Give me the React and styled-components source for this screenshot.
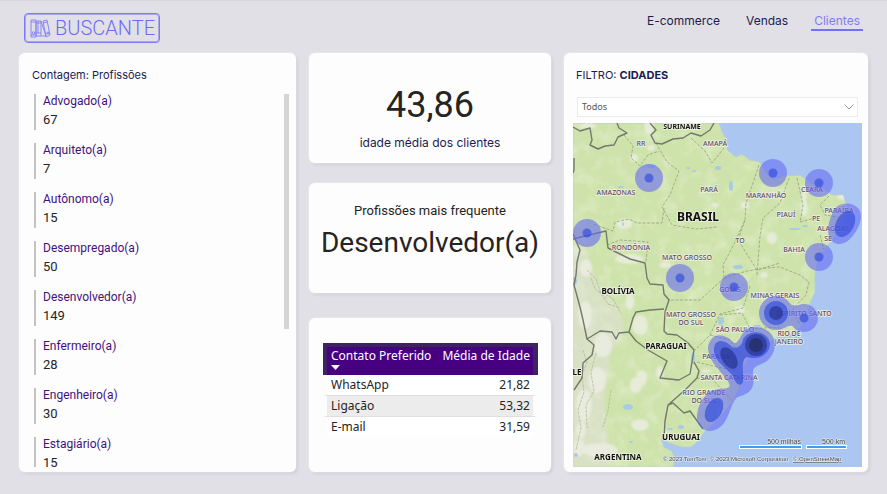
import React from "react";
import styled, { createGlobalStyle } from "styled-components";

const ui = `Inter, "Open Sans", sans-serif`;
const din = `Roboto, "Noto Sans", sans-serif`;

const GlobalStyle = createGlobalStyle`
  *, *::before, *::after { box-sizing: border-box; }
  body { margin: 0; background: #e1e0e6; }
`;

const Page = styled.div`
  display: flex;
  flex-direction: column;
  height: 100vh;
  min-height: 480px;
  padding: 0 19px 22px;
  border-top: 1px solid #d6d5db;
  background: #e1e0e6;
  color: #12143f;
  font-family: ${ui};
`;

const Header = styled.header`
  display: flex;
  flex: none;
  align-items: flex-start;
  justify-content: space-between;
  height: 52px;
  padding: 12px 5px 0;
`;

const Logo = styled.a`
  display: flex;
  align-items: center;
  gap: 4px;
  height: 30px;
  padding: 0 4px 0 5px;
  border: 1px solid #7f78f3;
  border-radius: 4px;
  box-shadow: inset 0 0 0 1px #aaa6f0;
  color: #7069f8;
  font: 300 20px/28px ${din};
  text-decoration: none;
`;

const LogoIcon = styled.svg`
  flex: none;
  width: 21px;
  height: 19px;
  fill: none;
  stroke: #8a85f3;
`;

const Nav = styled.nav`
  display: flex;
  gap: 20px;
`;

const NavLink = styled.a`
  height: 18px;
  padding: 0 3px;
  border-bottom: 2px solid ${(p) => (p.$active ? "#7570fa" : "transparent")};
  color: ${(p) => (p.$active ? "#827cf4" : "#1b1c50")};
  font-size: 12px;
  line-height: 16px;
  text-decoration: none;
`;

const Board = styled.main`
  display: grid;
  flex: 1;
  grid-template-columns: 277fr 242fr 304fr;
  gap: 13px;
  min-height: 0;
`;

const Column = styled.div`
  display: grid;
  grid-template-rows: 110fr 110fr 159fr;
  gap: 20px;
  min-height: 0;
`;

const Card = styled.section`
  display: flex;
  flex-direction: column;
  min-width: 0;
  min-height: 0;
  border-radius: 6px;
  background: #fdfdfd;
  box-shadow: 0 0 2px #f3f2f6, 2px 2px 3px #cfced8;
`;

const ListCard = styled(Card)`
  padding: 14px 6px 5px 13px;
`;

const FilterCard = styled(Card)`
  padding: 14px 6px 5px 9px;
`;

const MetricCard = styled(Card)`
  align-items: center;
  padding-top: ${(p) => (p.$top)}px;
`;

const TableCard = styled(Card)`
  margin-top: 5px;
  padding: 25px 13px 0 14px;
`;

const Heading = styled.h2`
  margin: 0;
  color: #1b1c50;
  font-size: 11px;
  font-weight: 400;
  line-height: 16px;
`;

const ScrollRow = styled.div`
  display: flex;
  flex: 1;
  justify-content: space-between;
  min-height: 0;
  margin-top: 11px;
`;

const ProfessionList = styled.dl`
  display: flex;
  flex: 1;
  flex-direction: column;
  gap: 13px;
  margin: 0 0 0 2px;
  overflow-y: auto;
  scrollbar-width: none;
`;

const Profession = styled.div`
  flex: none;
  padding-left: 7px;
  border-left: 2px solid #c3c3c3;
  font-family: ${din};
  font-size: 12px;
`;

const Name = styled.dt`
  color: #43107e;
  line-height: 15px;
`;

const Count = styled.dd`
  margin: 0;
  color: #252423;
  font-size: 13px;
  line-height: 21px;
`;

const Thumb = styled.div`
  width: 5px;
  height: 63%;
  margin-right: 1px;
  background: #d6d5d4;
`;

const Value = styled.strong`
  color: #252423;
  font-family: ${din};
  font-size: ${(p) => (p.$large ? 36 : 28)}px;
  font-weight: 400;
  line-height: ${(p) => (p.$large ? 40 : 48)}px;
`;

const Caption = styled.span`
  margin-top: ${(p) => (p.$below ? 10 : 0)}px;
  color: ${(p) => (p.$below ? "#1b1c50" : "#252423")};
  font-family: ${(p) => (p.$below ? ui : din)};
  font-size: ${(p) => (p.$below ? 12 : 13)}px;
  line-height: 16px;
`;

const Table = styled.table`
  width: 100%;
  border-spacing: 0;
  color: #252423;
  font: 12px/16px "Noto Sans", sans-serif;
  white-space: nowrap;

  th, td { text-align: left; }
  th:last-child, td:last-child { text-align: right; }
`;

const HeadCell = styled.th`
  height: 32px;
  padding: 2px 3px 0;
  border-top: 4px solid #3c2460;
  background: #480082;
  color: #fff;
  font-weight: 400;
  line-height: 14px;
  vertical-align: top;

  &:first-child { border-left: 4px solid #3c2460; padding-left: 4px; }
  &:last-child { border-right: 5px solid #3c2460; }
`;

const SortIcon = styled.svg`
  display: block;
  width: 9px;
  height: 5px;
  margin-top: 2px;
  fill: #fff;
`;

const Cell = styled.td`
  height: 21px;
  padding: 0 4px;
  border-bottom: 1px solid ${(p) => (p.$last ? "transparent" : "#dfdfdf")};
  background: ${(p) => (p.$shade ? "#ececec" : "#fff")};
  background-clip: padding-box;

  &:first-child { border-left: 4px solid transparent; }
  &:last-child { border-right: 5px solid transparent; padding-right: 3px; }
`;

const SelectBox = styled.div`
  display: grid;
  flex: none;
  align-items: center;
  margin: 14px 4px 6px;
`;

const Select = styled.select`
  grid-area: 1 / 1;
  width: 100%;
  height: 20px;
  padding: 0 4px;
  border: 1px solid #ececec;
  border-radius: 0;
  appearance: none;
  background: #fff;
  color: #555;
  font: 9px/16px "Noto Sans", sans-serif;
`;

const Chevron = styled.svg`
  grid-area: 1 / 1;
  justify-self: end;
  width: 10px;
  height: 6px;
  margin-right: 4px;
  fill: none;
  stroke: #999;
  pointer-events: none;
`;

const MapView = styled.svg`
  display: block;
  flex: 1;
  width: 100%;
  min-height: 0;
  font-family: "Noto Sans", sans-serif;
`;

const professions = [
  ["Advogado(a)", 67],
  ["Arquiteto(a)", 7],
  ["Autônomo(a)", 15],
  ["Desempregado(a)", 50],
  ["Desenvolvedor(a)", 149],
  ["Enfermeiro(a)", 28],
  ["Engenheiro(a)", 30],
  ["Estagiário(a)", 15],
];

const contacts = [
  ["WhatsApp", "21,82"],
  ["Ligação", "53,32"],
  ["E-mail", "31,59"],
];

const states = [
  ["RR", 641, 146], ["AMAPÁ", 715, 146], ["AMAZONAS", 616, 195], ["PARÁ", 709, 192],
  ["MARANHÃO", 766, 198], ["CEARÁ", 812, 192], ["PIAUÍ", 786, 217], ["PE", 816, 221],
  ["PARAÍBA", 839, 213], ["ALAGOAS", 833, 231], ["SE", 828, 241], ["TO", 740, 243],
  ["BAHIA", 794, 252], ["RONDÔNIA", 631, 250], ["MATO GROSSO", 687, 260],
  ["GOIÁS", 730, 292], ["MINAS GERAIS", 775, 298], ["ESPÍRITO SANTO", 804, 316],
  ["MATO GROSSO", 691, 317], ["DO SUL", 691, 325], ["SÃO PAULO", 735, 332],
  ["RIO DE", 789, 336], ["JANEIRO", 789, 344], ["PARANÁ", 716, 359],
  ["SANTA CATARINA", 729, 380], ["RIO GRANDE", 704, 395], ["DO SUL", 704, 403],
];

const countries = [
  ["SURINAME", 682, 129, 7], ["BRASIL", 698, 221, 12], ["BOLÍVIA", 618, 294, 8],
  ["PARAGUAI", 666, 349, 8], ["URUGUAI", 681, 440, 8], ["ARGENTINA", 618, 460, 8],
  ["LE", 577, 375, 8],
];

const spots = [
  [649, 178], [773, 173], [819, 183], [587, 233],
  [680, 278], [819, 257], [734, 287], [804, 318],
];

const lakes = [
  [651, 166, 5, 2], [621, 187, 3, 1], [688, 168, 2, 1], [694, 171, 2, 1], [718, 168, 3, 2],
  [731, 186, 2, 5], [623, 224, 1, 2], [574, 281, 3, 4], [628, 407, 5, 3], [681, 427, 3, 2],
  [670, 429, 3, 1], [693, 358, 2, 6], [677, 380, 3, 1], [631, 442, 2, 1], [738, 267, 5, 2],
  [721, 321, 3, 4], [795, 229, 6, 1], [805, 226, 3, 1], [757, 326, 4, 1], [576, 455, 2, 2],
];

const pale = [
  [649, 127, 5, 7], [634, 158, 4, 4], [651, 148, 4, 3], [715, 205, 4, 2], [624, 224, 8, 5],
  [804, 196, 3, 4], [842, 197, 5, 3], [745, 205, 4, 3], [630, 301, 4, 9], [586, 268, 6, 9],
  [585, 315, 7, 14], [603, 345, 9, 12], [597, 380, 9, 13], [584, 405, 8, 16], [581, 430, 5, 8],
  [579, 448, 6, 8], [636, 385, 6, 8], [642, 378, 5, 8], [804, 207, 3, 8], [665, 265, 6, 3],
  [772, 238, 5, 6], [629, 259, 14, 5], [640, 325, 8, 10], [640, 425, 9, 6], [740, 310, 5, 4],
  [706, 371, 5, 2], [764, 275, 4, 3], [588, 126, 8, 3], [660, 372, 4, 6], [600, 450, 18, 7],
];

const land =
  "M573 123H719L722 131L727 141L727 150L736 157L742 154L750 160L760 162L765 172L772 179L785 176L800 175L811 183L822 188L832 195L843 195L846 204L845 220L836 234L826 248L818 259L815 275L815 292L811 301L807 315L800 328L790 334L774 338L765 348L750 354L742 370L739 388L733 401L720 417L711 426L705 431L699 440L691 447L680 447L670 443L661 439L664 447L672 451L675 459L673 467H573Z";

const borders =
  "M573 127L580 131L590 128L592 140L590 145L598 149L605 146L614 145L618 137L627 133L619 128L617 123M650 123L656 130L651 135L655 143L662 144L673 139L683 138L691 133L701 136L710 130L714 123M574 158L574 170L573 173M573 239L585 236L606 231L608 248L620 254L630 259L645 263L647 278L650 284L663 285L664 294L669 300L665 312L664 331L667 334L677 335L688 343L694 350L690 374L679 380L660 378L667 361L648 350L636 341L629 332L633 318L636 312L650 310L664 309M573 234L580 250L577 262L576 275L574 285L580 307L583 320L587 339L600 331L612 332L616 339L619 333L629 332M587 339L594 345L592 355L583 363L582 378L574 390M694 362L699 371L697 378L685 390L668 405L665 421L664 438M668 405L673 403L684 413L690 411L703 429";

const stateLines =
  "M624 135L633 146L631 158L640 166L648 155L659 151M656 143L667 162L679 171L670 195L662 207L672 225L696 229L718 227M664 208L662 223H637L629 219L615 222L613 231L593 224M691 138L705 151L712 163L724 148M759 165L754 180L746 203L745 220L733 246L723 265L724 278M789 178L780 203L763 218L760 236L757 275M797 178L803 205L800 222L815 218M829 196L820 205L825 215L843 218M607 245L620 240L648 242L646 262M724 278L700 300L669 300M724 278L747 271L767 268L780 267L800 275L809 282L806 295L793 309L800 325M750 286L743 308L720 314L710 335L695 350M720 315L742 313L750 329L778 327L785 335M710 335L730 340L741 356M697 362L713 366L736 371M697 378L713 380L732 400M745 220L738 240L757 270L780 263M822 228L835 233M820 235L824 250";

function BinderIcon() {
  return (
    <LogoIcon viewBox="0 0 21 19" aria-hidden="true">
      <path d="M1 1h5v17H1zM6 2h5v15H6zM1 3h5M1 16h5M6 4h5M6 14h5M8 2v12" />
      <path d="M13 2l4-1 3 15-4 2zM13 4l4-1M16 15l4-1M11 2l5 15h-5" />
      <circle cx="3.5" cy="14" r="1.3" />
      <circle cx="18" cy="14" r="1" />
    </LogoIcon>
  );
}

function HeatMap() {
  return (
    <MapView viewBox="573 123 289 344" preserveAspectRatio="xMidYMid slice" role="img" aria-label="Mapa de clientes por cidade">
      <defs>
        <clipPath id="landClip"><path d={land} /></clipPath>
        <filter id="relief" x="0" y="0" width="100%" height="100%">
          <feTurbulence type="fractalNoise" baseFrequency="0.07" numOctaves="4" seed="8" />
          <feColorMatrix values="0 0 0 0 0.93  0 0 0 0 0.95  0 0 0 0 0.86  2.2 0 0 0 -1" />
        </filter>
        <filter id="soft"><feGaussianBlur stdDeviation="1.2" /></filter>
      </defs>
      <rect x="573" y="123" width="289" height="344" fill="#abc7f1" />
      <path d={land} fill="#cee3ab" stroke="#b5cfcc" />
      <g clipPath="url(#landClip)">
        <path d="M573 245L585 248L596 280L620 310L624 332L610 355L604 405L612 467H573Z" fill="#d9e1c5" filter="url(#soft)" />
        <rect x="573" y="123" width="289" height="344" filter="url(#relief)" opacity="0.35" />
        <g fill="#eceee3" opacity="0.8" filter="url(#soft)">
          {pale.map(([x, y, rx, ry]) => <ellipse key={`${x}-${y}`} cx={x} cy={y} rx={rx} ry={ry} />)}
        </g>
        <path d="M587 270l9 9 4 12 13 8 8 15M591 278l4 11 13 10M599 291l9 13 12 4M583 350l4 12-5 13 2 17-6 18 3 18-5 22M596 353l-5 20 3 18-8 14 1 23M611 390l-3 21-5 16" fill="none" stroke="#a9b88e" strokeDasharray="3 1" opacity="0.7" />
      </g>
      <g fill="#9dc4ec">
        {lakes.map(([x, y, rx, ry]) => <ellipse key={`${x}-${y}`} cx={x} cy={y} rx={rx} ry={ry} opacity="0.8" />)}
      </g>
      <path d={stateLines} fill="none" stroke="#93a17f" strokeWidth="0.8" strokeDasharray="3 1.5" />
      <path d={borders} fill="none" stroke="#73796b" strokeWidth="1.4" strokeLinejoin="round" />

      <g textAnchor="middle" fontSize="7" fontWeight="500" fill="#5c4d60" stroke="#eff2e5" strokeWidth="1.4" paintOrder="stroke">
        {states.map(([label, x, y]) => <text key={`${x}-${y}`} x={x} y={y}>{label}</text>)}
      </g>

      <g fill="#686cf4" opacity="0.6">
        {spots.map(([x, y]) => <circle key={`${x}-${y}`} cx={x} cy={y} r="14" />)}
        <circle cx="776" cy="313" r="17" />
        <path d="M784 299Q792 309 804 304V332Q794 322 784 328Z" />
        <path d="M832 214C835 202 852 200 859 209C865 219 856 233 850 239C843 246 833 246 829 237C827 229 829 221 832 214Z" />
        <path d="M708 347C711 332 724 332 734 343C741 344 740 326 756 327C777 328 780 350 767 361C759 366 752 365 753 374C756 390 748 394 738 397C730 402 730 421 719 428C709 435 697 429 697 418C697 406 704 393 714 390C723 388 732 390 729 383C721 370 708 362 708 347Z" />
      </g>
      <g fill="#3049dd" opacity="0.65">
        {spots.map(([x, y]) => <circle key={`${x}-${y}`} cx={x} cy={y} r="4.5" />)}
        <circle cx="776" cy="313" r="12" />
        <ellipse cx="845" cy="224" rx="9" ry="14" transform="rotate(28 845 224)" />
        <path d="M714 348C716 338 725 340 732 347C738 350 743 344 743 339C750 328 769 331 770 344C769 357 756 360 747 357C740 359 744 376 743 382C740 388 735 383 733 376C726 367 713 361 714 348Z" />
        <ellipse cx="714" cy="410" rx="8" ry="13" transform="rotate(28 714 410)" />
      </g>
      <g fill="#1b2779" opacity="0.55">
        <circle cx="776" cy="313" r="7" />
        <circle cx="756" cy="345" r="11" />
        <circle cx="756" cy="345" r="7" fill="#06091c" />
        <ellipse cx="729" cy="358" rx="7" ry="12" transform="rotate(-32 729 358)" />
        <ellipse cx="730" cy="361" rx="3" ry="5" transform="rotate(-32 730 361)" />
      </g>

      <g textAnchor="middle" fontWeight="700" fill="#111" stroke="#edf1df" strokeWidth="1.6" paintOrder="stroke">
        {countries.map(([label, x, y, size]) => <text key={label} x={x} y={y} fontSize={size}>{label}</text>)}
      </g>

      <g stroke="#fff" strokeWidth="4"><path d="M739 447H802M806 447H847" /></g>
      <g stroke="#409cf5" strokeWidth="2"><path d="M740 447H801M807 447H846" /></g>
      <g fontFamily="Liberation Sans" fontSize="6" fill="#444" stroke="#e3ebf6" strokeWidth="1" paintOrder="stroke">
        <text x="801" y="444" fontSize="7" textAnchor="end">500 milhas</text>
        <text x="845" y="444" fontSize="7" textAnchor="end">500 km</text>
        <text x="790" y="461" textAnchor="end">© 2023 TomTom, © 2023 Microsoft Corporation,</text>
        <a href="#osm"><text x="793" y="461" textDecoration="underline">© OpenStreetMap</text></a>
      </g>
    </MapView>
  );
}

export default function App() {
  return (
    <>
      <GlobalStyle />
      <Page>
        <Header>
          <Logo href="#inicio"><BinderIcon />BUSCANTE</Logo>
          <Nav>
            <NavLink href="#ecommerce">E-commerce</NavLink>
            <NavLink href="#vendas">Vendas</NavLink>
            <NavLink href="#clientes" $active aria-current="page">Clientes</NavLink>
          </Nav>
        </Header>
        <Board>
          <ListCard>
            <Heading>Contagem: Profissões</Heading>
            <ScrollRow>
              <ProfessionList tabIndex={0}>
                {professions.map(([name, count]) => (
                  <Profession key={name}>
                    <Name>{name}</Name>
                    <Count>{count}</Count>
                  </Profession>
                ))}
              </ProfessionList>
              <Thumb />
            </ScrollRow>
          </ListCard>

          <Column>
            <MetricCard $top={32}>
              <Value $large>43,86</Value>
              <Caption $below>idade média dos clientes</Caption>
            </MetricCard>
            <MetricCard $top={20}>
              <Caption>Profissões mais frequente</Caption>
              <Value>Desenvolvedor(a)</Value>
            </MetricCard>
            <TableCard>
              <Table>
                <thead>
                  <tr>
                    <HeadCell scope="col" aria-sort="descending">
                      Contato Preferido
                      <SortIcon viewBox="0 0 9 5" aria-hidden="true"><path d="M0 0h9L4.500 5z" /></SortIcon>
                    </HeadCell>
                    <HeadCell scope="col">Média de Idade</HeadCell>
                  </tr>
                </thead>
                <tbody>
                  {contacts.map(([name, age], i) => (
                    <tr key={name}>
                      <Cell $shade={i === 1} $last={i === 2}>{name}</Cell>
                      <Cell $shade={i === 1} $last={i === 2}>{age}</Cell>
                    </tr>
                  ))}
                </tbody>
              </Table>
            </TableCard>
          </Column>

          <FilterCard>
            <Heading as="label" htmlFor="cidade">&nbsp;FILTRO: <b>CIDADES</b></Heading>
            <SelectBox>
              <Select id="cidade" defaultValue="Todos"><option>Todos</option></Select>
              <Chevron viewBox="0 0 10 6" aria-hidden="true"><path d="M.5.5L5 5 9.500.5" /></Chevron>
            </SelectBox>
            <HeatMap />
          </FilterCard>
        </Board>
      </Page>
    </>
  );
}
